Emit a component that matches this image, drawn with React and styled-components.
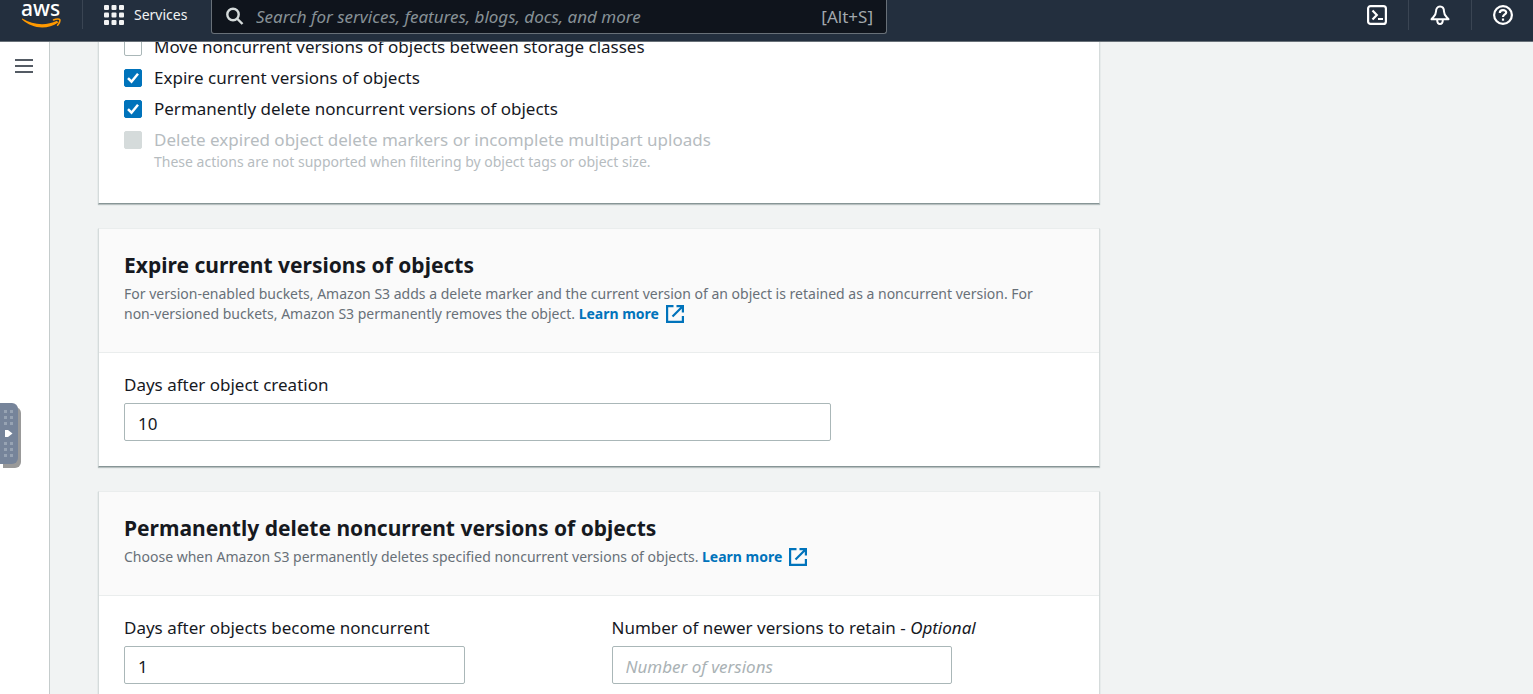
import React, { useState } from "react";
import styled, { createGlobalStyle } from "styled-components";

const GlobalStyle = createGlobalStyle`
  *, *::before, *::after { box-sizing: border-box; }
  html, body { margin: 0; }
  body {
    background: #f1f3f3;
    color: #16191f;
    font-family: "Noto Sans", "Open Sans", sans-serif;
    font-size: 17px;
    line-height: 22px;
  }
  button, input { font: inherit; color: inherit; }
`;

const Page = styled.div`
  display: flex;
  flex-direction: column;
  height: 100vh;
  overflow: hidden;
`;

const TopBar = styled.header`
  position: relative;
  z-index: 2;
  flex: none;
  display: flex;
  align-items: flex-start;
  height: 42px;
  background: #232f3e;
  border-bottom: 1px solid #687078;
  color: #f2f3f3;
`;

const HomeLink = styled.a`
  flex: none;
  display: block;
  width: 83px;
  height: 29px;
  padding-left: 21px;
  border-right: 1px solid #3a4553;

  svg { display: block; overflow: visible; }
  text {
    fill: #fff;
    font-size: 21px;
    font-weight: 500;
  }
`;

const ServicesButton = styled.button`
  flex: none;
  display: flex;
  align-items: center;
  gap: 10px;
  width: 128px;
  height: 30px;
  padding: 0 0 0 21px;
  border: 0;
  background: none;
  color: #f2f3f3;
  font-size: 14px;
  cursor: pointer;
`;

const SearchBox = styled.label`
  display: flex;
  align-items: center;
  flex: 0 1 676px;
  height: 34px;
  padding: 0 13px;
  background: #0f141c;
  border: 1px solid #687078;
  border-top: 0;
  border-radius: 0 0 3px 3px;
  color: #a2a8ad;

  svg { flex: none; color: #d5dbdb; }
`;

const SearchInput = styled.input`
  flex: 1;
  min-width: 0;
  padding: 0 0 0 11px;
  border: 0;
  outline: 0;
  background: none;

  &::placeholder { color: #879196; font-style: italic; opacity: 1; }
`;

const Tools = styled.nav`
  display: flex;
  margin-left: auto;
`;

const ToolButton = styled.button`
  display: flex;
  align-items: center;
  justify-content: center;
  width: ${(p) => (p.$last ? "61px" : "63px")};
  height: 30px;
  padding: 0;
  border: 0;
  border-right: ${(p) => (p.$last ? "0" : "1px solid #3a4553")};
  background: none;
  color: #fff;
  cursor: pointer;
`;

const Body = styled.div`
  display: flex;
  flex: 1;
  min-height: 0;
`;

const Rail = styled.aside`
  flex: none;
  width: 50px;
  padding-top: 15px;
  background: #fff;
  border-right: 1px solid #c5cccc;
`;

const MenuButton = styled.button`
  display: flex;
  justify-content: center;
  width: 48px;
  padding: 0;
  border: 0;
  background: none;
  color: #545b64;
  cursor: pointer;
`;

const Handle = styled.button`
  position: fixed;
  left: 0;
  top: 403px;
  z-index: 3;
  width: 18px;
  height: 61px;
  padding: 0;
  border: 0;
  border-radius: 0 6px 6px 0;
  background: #76849a;
  box-shadow: 3px 4px 0 #999;
  cursor: pointer;

  svg { display: block; }
`;

const Main = styled.main`
  flex: 1;
  min-width: 0;
  padding: 0 48px;
`;

const Stack = styled.form`
  display: flex;
  flex-direction: column;
  gap: 24px;
  max-width: 1002px;
  margin-top: -7px;
`;

const Card = styled.section`
  background: #fff;
  border: 1px solid #d5dbdb;
  border-top-color: #eaeded;
  border-bottom-color: #879596;
  box-shadow: 0 1px 1px #b8c0c0;
`;

const CardHeader = styled.div`
  padding: 23px 25px 28px;
  background: #fafafa;
  border-bottom: 1px solid #eaeded;
`;

const Title = styled.h2`
  margin: 0 0 5px;
  font-size: 21px;
  line-height: 27px;
  font-weight: 700;
`;

const Description = styled.p`
  margin: 0;
  color: #687078;
  font-size: 14px;
  line-height: 20px;
`;

const NoBreak = styled.span`
  white-space: nowrap;
`;

const LearnMore = styled.a`
  color: #0073bb;
  font-weight: 700;
  text-decoration: none;
  white-space: nowrap;

  svg { margin-left: 7px; vertical-align: -4px; }
`;

const Options = styled.div`
  display: flex;
  flex-direction: column;
  gap: 9px;
  padding: 0 25px 30px;
`;

const Option = styled.label`
  display: grid;
  grid-template-columns: 18px 1fr;
  column-gap: 12px;
  align-items: center;
  color: ${(p) => (p.$disabled ? "#b6bcbf" : "#16191f")};
`;

const Check = styled.input`
  appearance: none;
  width: 18px;
  height: 18px;
  margin: 0;
  border: 1px solid #aab7b8;
  border-radius: 2px;
  background: #fff;

  &:checked {
    border-color: #0073bb;
    background: #0073bb;
  }
  &:disabled {
    border-color: #d5dbdb;
    background: #d5dbdb;
  }
`;

const CheckCell = styled.span`
  display: grid;
  > * { grid-area: 1 / 1; }
  svg { pointer-events: none; }
`;

const Hint = styled.span`
  grid-column: 2;
  font-size: 14px;
`;

const Fields = styled.div`
  display: grid;
  grid-template-columns: ${(p) => (p.$columns === 2 ? "1fr 1fr" : "1fr")};
  column-gap: 25px;
  padding: 21px 25px 25px;
`;

const Field = styled.div`
  label { display: block; margin-bottom: 7px; }
`;

const TextInput = styled.input`
  display: block;
  width: calc(75% - 6px);
  height: 38px;
  padding: 2px 13px 0;
  border: 1px solid #aab7b8;
  border-radius: 2px;
  background: #fff;

  &::placeholder { color: #aab2b5; font-style: italic; opacity: 1; }
`;

const AwsLogo = () => (
  <svg width="42" height="29" viewBox="0 0 42 29" aria-hidden="true">
    <text x="0" y="16">aws</text>
    <path d="M0.800 19.300C11 28.800 26 30.200 37.200 22.500L36 20.800C25 26 12 25 1.300 18.600Z" fill="#f90" />
    <path d="M32.500 20C35.500 18.600 38.400 18.800 38.800 19.600C39.300 20.600 38.300 23.500 36.600 25.200" fill="none" stroke="#f90" strokeWidth="1.600" strokeLinecap="round" />
  </svg>
);

const GridIcon = () => (
  <svg width="20" height="20" viewBox="0 0 20 20" fill="currentColor" aria-hidden="true">
    {[0, 7.500, 15].map((y) => [0, 7.500, 15].map((x) => (
      <rect key={`${x}-${y}`} x={x} y={y} width="5" height="5" rx="1" />
    )))}
  </svg>
);

const SearchIcon = () => (
  <svg width="20" height="20" viewBox="0 0 20 20" fill="none" stroke="currentColor" strokeWidth="2.400" aria-hidden="true">
    <circle cx="8" cy="7.500" r="5.700" />
    <path d="M12 11.500L17.500 17" />
  </svg>
);

const TerminalIcon = () => (
  <svg width="20" height="20" viewBox="0 0 20 20" fill="none" stroke="currentColor" strokeWidth="2.200" aria-hidden="true">
    <rect x="1.100" y="1.100" width="17.800" height="17.800" rx="2.500" />
    <path d="M5.500 5.500L9.800 10L5.500 14.500M11 14H16" />
  </svg>
);

const BellIcon = () => (
  <svg width="20" height="20" viewBox="0 0 20 20" fill="none" stroke="currentColor" strokeWidth="2" strokeLinejoin="round" aria-hidden="true">
    <path d="M10 1.500C7.400 1.500 6 3.800 6 6.500C6 10.500 4 11.500 1.500 14.200H18.500C16 11.500 14 10.500 14 6.500C14 3.800 12.600 1.500 10 1.500Z" />
    <path d="M7.200 15C7.200 17.500 8.200 19 10 19C11.800 19 12.800 17.500 12.800 15" />
  </svg>
);

const HelpIcon = () => (
  <svg width="20" height="20" viewBox="0 0 20 20" fill="none" stroke="currentColor" strokeWidth="2.200" aria-hidden="true">
    <circle cx="10" cy="10" r="8.900" />
    <path d="M6.800 8C6.800 6 8 5.200 10 5.200C12 5.200 13.200 6 13.200 7.500C13.200 9.500 10 9.500 10 12" />
    <path d="M10 13.500V15.700" />
  </svg>
);

const MenuIcon = () => (
  <svg width="18" height="18" viewBox="0 0 18 18" stroke="currentColor" strokeWidth="2" aria-hidden="true">
    <path d="M0 3H18M0 9H18M0 15H18" />
  </svg>
);

const ExternalIcon = () => (
  <svg width="18" height="18" viewBox="0 0 18 18" fill="none" stroke="currentColor" strokeWidth="2.200" aria-hidden="true">
    <path d="M7.500 1.100H1.100V16.900H16.900V11M10.500 1.100H16.900V7.500M16.500 1.500L6.500 11.500" />
  </svg>
);

const CheckMark = () => (
  <svg width="18" height="18" viewBox="0 0 18 18" fill="none" stroke="#fff" strokeWidth="2.500" aria-hidden="true">
    <path d="M4 9.200L7.500 12.700L14 4.800" />
  </svg>
);

const GripIcon = () => (
  <svg width="18" height="61" viewBox="0 0 18 61" aria-hidden="true">
    {[7, 13, 19, 39, 45, 51].map((y) => [4, 10].map((x) => (
      <rect key={`${x}-${y}`} x={x} y={y} width="3" height="3" fill="#97a3b3" />
    )))}
    <path d="M5 27H8L12.500 30.500L8 34H5Z" fill="#fff" />
  </svg>
);

function CheckOption({ label, hint, disabled, defaultChecked = false }) {
  const [checked, setChecked] = useState(defaultChecked);
  return (
    <Option $disabled={disabled}>
      <CheckCell>
        <Check type="checkbox" checked={checked} disabled={disabled} onChange={(e) => setChecked(e.target.checked)} />
        {checked && <CheckMark />}
      </CheckCell>
      <span>{label}</span>
      {hint && <Hint>{hint}</Hint>}
    </Option>
  );
}

export default function App() {
  return (
    <Page>
      <GlobalStyle />
      <TopBar>
        <HomeLink href="#home" aria-label="AWS home"><AwsLogo /></HomeLink>
        <ServicesButton type="button"><GridIcon />Services</ServicesButton>
        <SearchBox>
          <SearchIcon />
          <SearchInput type="text" aria-label="Search" placeholder="Search for services, features, blogs, docs, and more" />
          <span>[Alt+S]</span>
        </SearchBox>
        <Tools>
          <ToolButton type="button" aria-label="CloudShell"><TerminalIcon /></ToolButton>
          <ToolButton type="button" aria-label="Notifications"><BellIcon /></ToolButton>
          <ToolButton type="button" aria-label="Help" $last><HelpIcon /></ToolButton>
        </Tools>
      </TopBar>
      <Body>
        <Rail>
          <MenuButton type="button" aria-label="Open navigation"><MenuIcon /></MenuButton>
        </Rail>
        <Main>
          <Stack>
            <Card>
              <Options>
                <CheckOption label="Move noncurrent versions of objects between storage classes" />
                <CheckOption label="Expire current versions of objects" defaultChecked />
                <CheckOption label="Permanently delete noncurrent versions of objects" defaultChecked />
                <CheckOption
                  label="Delete expired object delete markers or incomplete multipart uploads"
                  hint="These actions are not supported when filtering by object tags or object size."
                  disabled
                />
              </Options>
            </Card>
            <Card>
              <CardHeader>
                <Title>Expire current versions of objects</Title>
                <Description>
                  For version-enabled buckets, Amazon S3 adds a delete marker and the current version of an object is retained as a noncurrent version. For{" "}
                  <NoBreak>non-versioned</NoBreak> buckets, Amazon S3 permanently removes the object.{" "}
                  <LearnMore href="#expire">Learn more<ExternalIcon /></LearnMore>
                </Description>
              </CardHeader>
              <Fields>
                <Field>
                  <label htmlFor="expire-days">Days after object creation</label>
                  <TextInput id="expire-days" type="text" defaultValue="10" />
                </Field>
              </Fields>
            </Card>
            <Card>
              <CardHeader>
                <Title>Permanently delete noncurrent versions of objects</Title>
                <Description>
                  Choose when Amazon S3 permanently deletes specified noncurrent versions of objects.{" "}
                  <LearnMore href="#delete">Learn more<ExternalIcon /></LearnMore>
                </Description>
              </CardHeader>
              <Fields $columns={2}>
                <Field>
                  <label htmlFor="noncurrent-days">Days after objects become noncurrent</label>
                  <TextInput id="noncurrent-days" type="text" defaultValue="1" />
                </Field>
                <Field>
                  <label htmlFor="newer-versions">Number of newer versions to retain - <i>Optional</i></label>
                  <TextInput id="newer-versions" type="text" placeholder="Number of versions" />
                </Field>
              </Fields>
            </Card>
          </Stack>
        </Main>
      </Body>
      <Handle type="button" aria-label="Open side panel"><GripIcon /></Handle>
    </Page>
  );
}
